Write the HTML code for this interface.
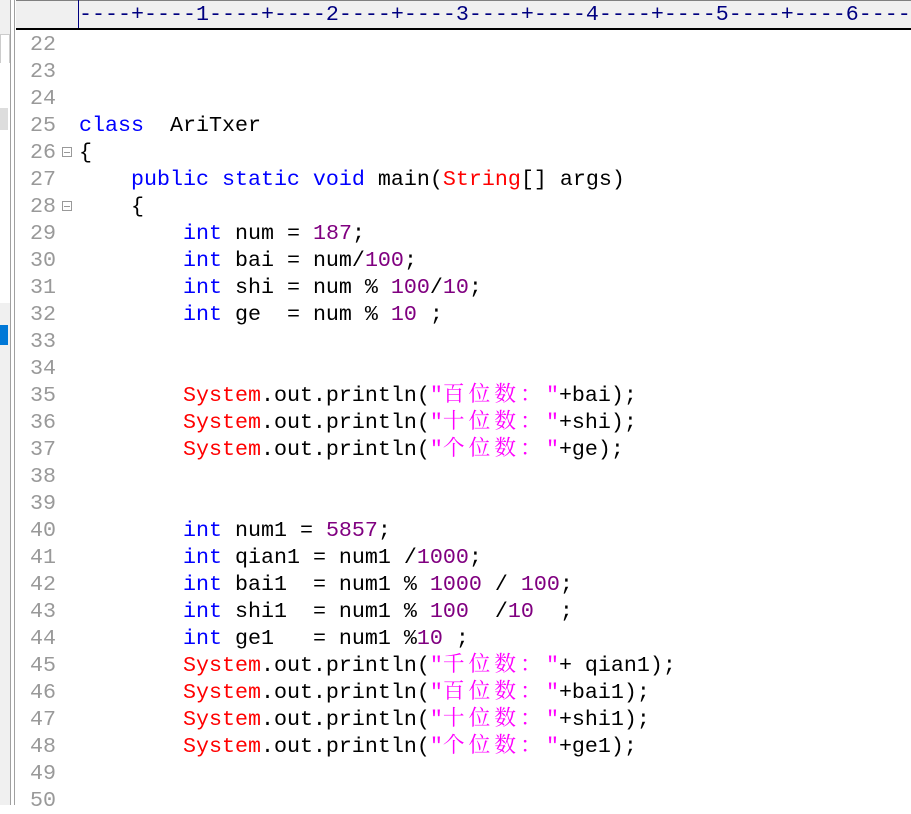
<!DOCTYPE html>
<html><head><meta charset="utf-8"><style>
body{margin:0;width:911px;height:805px;overflow:hidden;background:#fff;position:relative;font-family:"Liberation Mono",monospace;}
.lp{position:absolute;left:0;top:0;width:10px;height:805px;background:#f0f0f0;border-right:1px solid #a0a0a0}
.lp2{position:absolute;left:14px;top:0;width:1px;height:805px;background:#a0a0a0}
.ruler{position:absolute;left:16px;top:0;width:895px;height:27px;background:#f0f0f0;border-top:1px solid #808080;border-bottom:2px solid #000}
.rt{position:absolute;left:78px;top:0;height:28px;line-height:30px;font-size:21.67px;color:#000080;white-space:pre;border-left:1px solid #000080}
.ln{position:absolute;left:30px;font-size:21.67px;color:#999;line-height:27px}
.cd{position:absolute;left:79px;font-size:21.67px;white-space:pre;line-height:27px;height:27px;color:#000}
.k{color:#0000ff}.n{color:#800080}.s{color:#ff00ff}.r{color:#ff0000}
.c{font-family:"Noto Serif CJK SC","Noto Sans CJK SC",serif;letter-spacing:4.1px;font-size:21.67px;line-height:10px;display:inline-block;vertical-align:0}
.fold{position:absolute;left:62px;width:8px;height:8px;border:1px solid #999}
.fold:after{content:"";position:absolute;left:1px;top:3.5px;width:6px;height:1px;background:#999}
</style></head><body>
<div class="lp"></div>
<div style="position:absolute;left:0;top:34px;width:8px;height:28px;background:#fff;border:1px solid #ccc"></div>
<div style="position:absolute;left:0;top:63px;width:10px;height:240px;background:#fff"></div>
<div style="position:absolute;left:0;top:108px;width:8px;height:22px;background:#ddd"></div>
<div style="position:absolute;left:0;top:325px;width:8px;height:20px;background:#0078d7"></div>
<div class="lp2"></div>
<div class="ruler"></div>
<div class="rt">----+----1----+----2----+----3----+----4----+----5----+----6-----</div>
<div class="fold" style="top:147px"></div>
<div class="fold" style="top:201px"></div>
<div id="g"></div>
<script>
var lines=[
'','','',
'<span class="k">class</span>  AriTxer',
'{',
'    <span class="k">public static void</span> main(<span class="r">String</span>[] args)',
'    {',
'        <span class="k">int</span> num = <span class="n">187</span>;',
'        <span class="k">int</span> bai = num/<span class="n">100</span>;',
'        <span class="k">int</span> shi = num % <span class="n">100</span>/<span class="n">10</span>;',
'        <span class="k">int</span> ge  = num % <span class="n">10</span> ;',
'','',
'        <span class="r">System</span>.out.println(<span class="s">"<span class="c">百位数：</span>"</span>+bai);',
'        <span class="r">System</span>.out.println(<span class="s">"<span class="c">十位数：</span>"</span>+shi);',
'        <span class="r">System</span>.out.println(<span class="s">"<span class="c">个位数：</span>"</span>+ge);',
'','',
'        <span class="k">int</span> num1 = <span class="n">5857</span>;',
'        <span class="k">int</span> qian1 = num1 /<span class="n">1000</span>;',
'        <span class="k">int</span> bai1  = num1 % <span class="n">1000</span> / <span class="n">100</span>;',
'        <span class="k">int</span> shi1  = num1 % <span class="n">100</span>  /<span class="n">10</span>  ;',
'        <span class="k">int</span> ge1   = num1 %<span class="n">10</span> ;',
'        <span class="r">System</span>.out.println(<span class="s">"<span class="c">千位数：</span>"</span>+ qian1);',
'        <span class="r">System</span>.out.println(<span class="s">"<span class="c">百位数：</span>"</span>+bai1);',
'        <span class="r">System</span>.out.println(<span class="s">"<span class="c">十位数：</span>"</span>+shi1);',
'        <span class="r">System</span>.out.println(<span class="s">"<span class="c">个位数：</span>"</span>+ge1);',
'',''];
var h='';
for(var i=0;i<lines.length;i++){var t=31+i*27;
h+='<div class="ln" style="top:'+t+'px">'+(22+i)+'</div><div class="cd" style="top:'+t+'px">'+lines[i]+'</div>';}
document.getElementById('g').innerHTML=h;
</script>
</body></html>
